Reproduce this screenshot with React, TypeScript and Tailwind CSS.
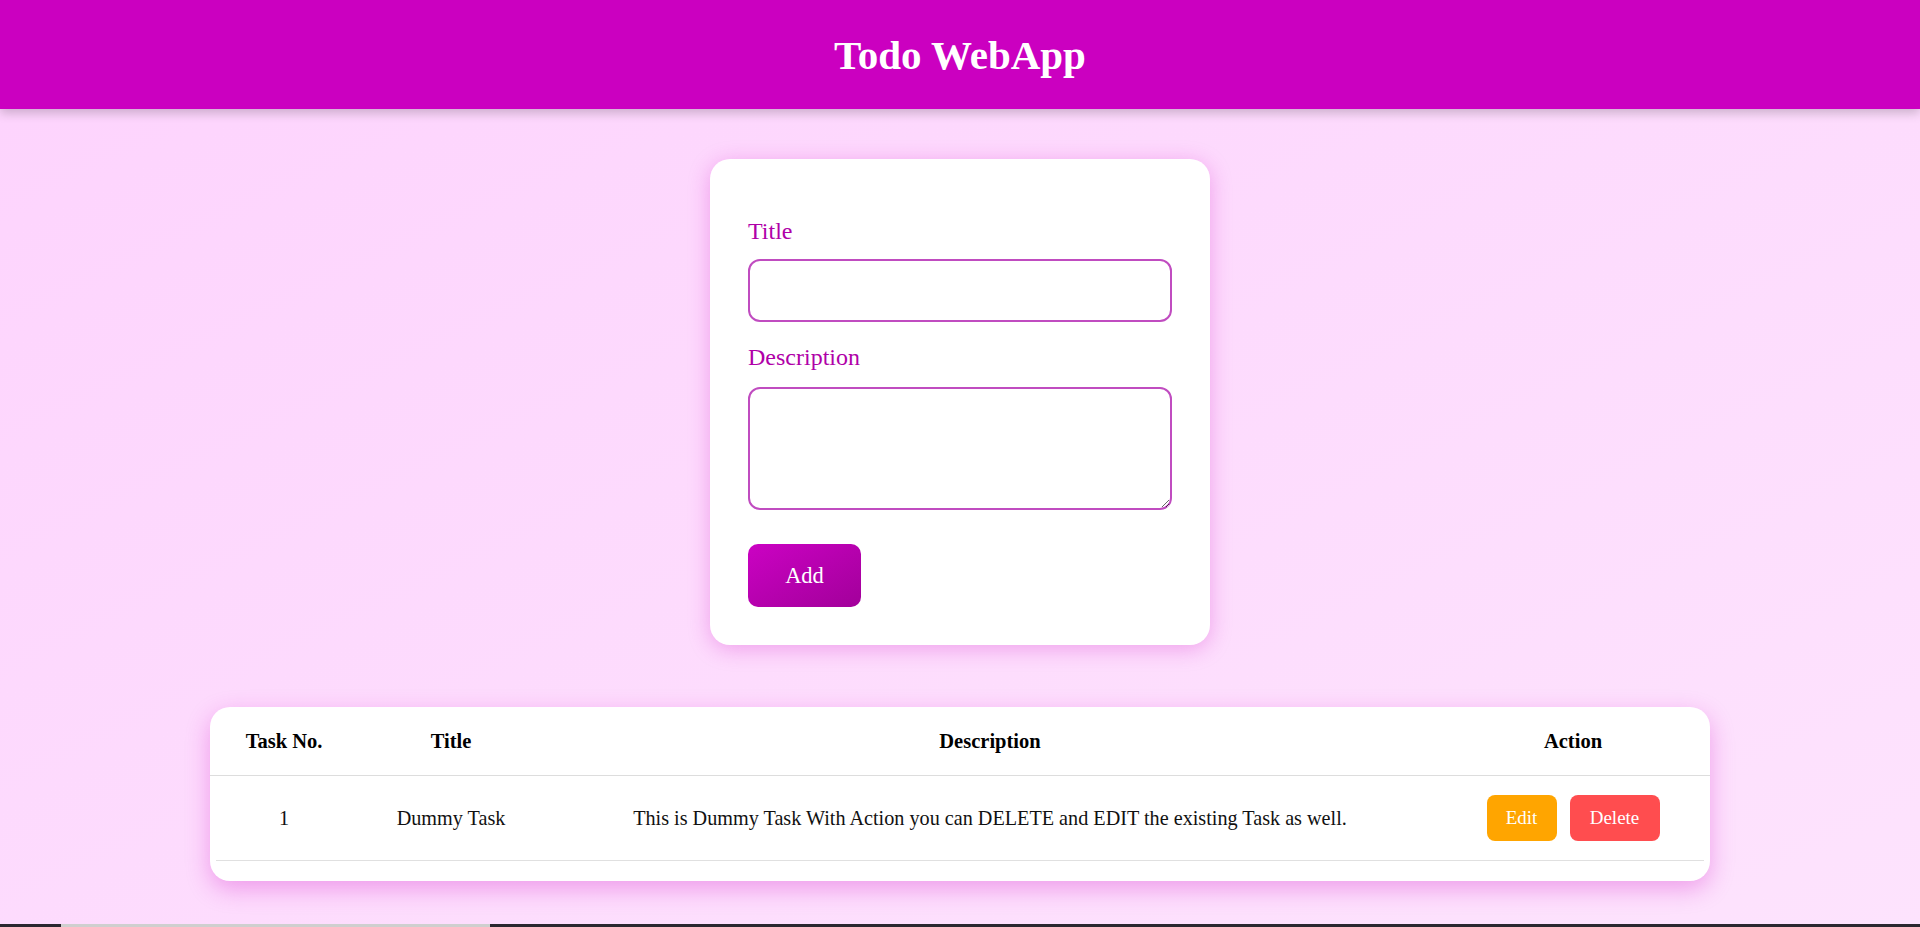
import React from "react";

export default function App() {
  return (
    <div className="h-screen flex flex-col bg-linear-to-br from-[#fdd3fd] to-[#fde3fd] font-['Liberation_Serif',serif] overflow-hidden">
      <header className="h-[109px] shrink-0 bg-[#cb00c0] flex items-center justify-center shadow-[0_4px_10px_rgba(0,0,0,0.2)] relative z-10">
        <h1 className="text-white text-[41px] font-bold leading-[46px]">Todo WebApp</h1>
      </header>

      <main className="flex-1 flex flex-col items-center">
        <div className="mt-[50px] w-[500px] bg-white rounded-[20px] px-[38px] pt-[59px] pb-[38px] shadow-[0_4px_22px_rgba(204,0,192,0.28)]">
          <label className="block text-[24px] leading-[26px] text-[#b000a8]">Title</label>
          <input className="mt-[15px] block w-full h-[63px] border-2 border-[#c04cc0] rounded-[12px] outline-none px-3 text-[18px]" />
          <label className="block mt-[22px] text-[24px] leading-[26px] text-[#b000a8]">Description</label>
          <textarea className="mt-[17px] block w-full h-[123px] border-2 border-[#c04cc0] rounded-[12px] outline-none px-3 py-2 text-[18px]" />
          <button className="mt-[34px] h-[63px] w-[113px] rounded-[10px] bg-linear-to-br from-[#cb02c3] to-[#a2009a] text-white text-[22.5px]">
            Add
          </button>
        </div>

        <div className="mt-[62px] w-[1500px] bg-white rounded-[20px] pb-[20px] shadow-[0_8px_25px_rgba(204,0,192,0.3)]">
          <div className="grid grid-cols-[148px_186px_892px_1fr] h-[69px] items-center border-b border-[#dddddd] text-[20.5px] font-bold text-black text-center">
            <div>Task No.</div>
            <div>Title</div>
            <div>Description</div>
            <div>Action</div>
          </div>
          <div className="mx-[6px] border-b border-[#e0e0e0]">
            <div className="-mx-[6px] grid grid-cols-[148px_186px_892px_1fr] h-[84px] items-center text-[20.2px] text-[#111] text-center">
              <div>1</div>
              <div>Dummy Task</div>
              <div>This is Dummy Task With Action you can DELETE and EDIT the existing Task as well.</div>
              <div className="flex justify-center gap-[13px]">
                <button className="h-[46px] w-[70px] rounded-[8px] bg-[#ffa500] text-white text-[19px]">Edit</button>
                <button className="h-[46px] w-[90px] rounded-[8px] bg-[#ff4d4f] text-white text-[19px]">Delete</button>
              </div>
            </div>
          </div>
        </div>
      </main>

      <div className="h-[3px] shrink-0 bg-[#2b2730] flex">
        <div className="ml-[61px] w-[429px] bg-[#cfcfcf]" />
      </div>
    </div>
  );
}
